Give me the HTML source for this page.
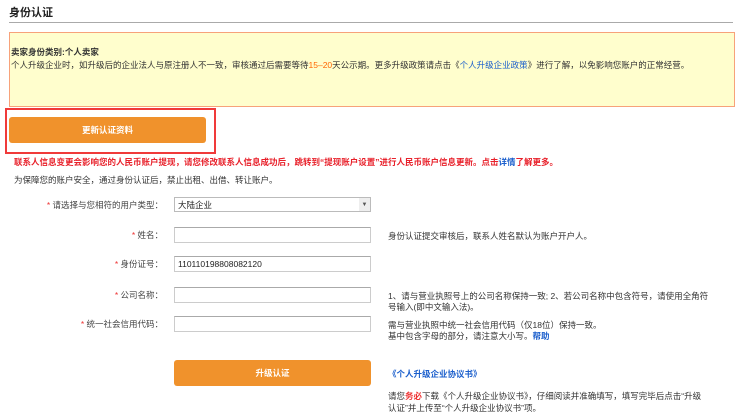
<!DOCTYPE html>
<html><head><meta charset="utf-8"><style>
*{margin:0;padding:0;box-sizing:border-box}
body{width:740px;height:420px;background:#fff;font-family:"Liberation Sans","Noto Sans CJK SC",sans-serif;font-size:8.5px;color:#333;position:relative;overflow:hidden}
.a{position:absolute;white-space:nowrap}
.inp{position:absolute;left:174px;width:197px;height:16px;border:1px solid #ccc;border-top-color:#aaa;background:#fff;font-size:8.5px;line-height:14px;padding-left:3px;color:#222}
.lab{position:absolute;right:577px;text-align:right;white-space:nowrap;color:#444}
.lab b{color:#e33;font-weight:normal}
.btn{position:absolute;background:#f0922c;border-radius:3px;color:#fff;text-align:center;font-weight:bold}
.blue{color:#1a5ecc}
</style></head><body>
<div class="a" style="left:9px;top:4px;font-size:11px;font-weight:bold;color:#222">身份认证</div>
<div class="a" style="left:9px;top:22px;width:724px;height:1px;background:#aaa"></div>
<div class="a" style="left:9px;top:32px;width:726px;height:75px;background:#fffecd;border:1px solid #f7a27a"></div>
<div class="a" style="left:11px;top:46px;font-weight:bold;color:#333">卖家身份类别:个人卖家</div>
<div class="a" style="left:11px;top:59px;color:#333">个人升级企业时，如升级后的企业法人与原注册人不一致，审核通过后需要等待<span style="color:#f60">15–20</span>天公示期。更多升级政策请点击《<span class="blue">个人升级企业政策</span>》进行了解，以免影响您账户的正常经营。</div>
<div class="a" style="left:5px;top:108px;width:211px;height:46px;border:2px solid #f03a3a"></div>
<div class="btn" style="left:9px;top:117px;width:197px;height:26px;line-height:26px">更新认证资料</div>
<div class="a" style="left:14px;top:156px;color:#e8202a;font-weight:bold">联系人信息变更会影响您的人民币账户提现，请您修改联系人信息成功后，跳转到“提现账户设置”进行人民币账户信息更新。点击<span class="blue">详情</span>了解更多。</div>
<div class="a" style="left:14px;top:174px;color:#333">为保障您的账户安全，通过身份认证后，禁止出租、出借、转让账户。</div>

<div class="lab" style="top:199px"><b>* </b>请选择与您相符的用户类型：</div>
<div class="inp" style="top:197px;height:15px;border-color:#bbb">大陆企业<span style="position:absolute;right:0;top:0;width:11px;height:13px;background:#eee;font-size:6px;text-align:center;color:#555">▼</span></div>

<div class="lab" style="top:229px"><b>* </b>姓名：</div>
<div class="inp" style="top:227px"></div>
<div class="a" style="left:388px;top:230px">身份认证提交审核后，联系人姓名默认为账户开户人。</div>

<div class="lab" style="top:258px"><b>* </b>身份证号：</div>
<div class="inp" style="top:256px">110110198808082120</div>

<div class="lab" style="top:289px"><b>* </b>公司名称：</div>
<div class="inp" style="top:287px"></div>
<div class="a" style="left:388px;top:291px;line-height:11px">1、请与营业执照号上的公司名称保持一致; 2、若公司名称中包含符号，请使用全角符<br>号输入(即中文输入法)。</div>

<div class="lab" style="top:318px"><b>* </b>统一社会信用代码：</div>
<div class="inp" style="top:316px"></div>
<div class="a" style="left:388px;top:320px;line-height:11px">需与营业执照中统一社会信用代码（仅18位）保持一致。<br>基中包含字母的部分，请注意大小写。<span class="blue" style="font-weight:bold">帮助</span></div>

<div class="btn" style="left:174px;top:360px;width:197px;height:26px;line-height:26px">升级认证</div>
<div class="a blue" style="left:388px;top:368px;font-weight:bold">《个人升级企业协议书》</div>
<div class="a" style="left:388px;top:390px;line-height:12px">请您<span style="color:#e33;font-weight:bold">务必</span>下载《个人升级企业协议书》，仔细阅读并准确填写，填写完毕后点击“升级<br>认证”并上传至“个人升级企业协议书”项。</div>
</body></html>
